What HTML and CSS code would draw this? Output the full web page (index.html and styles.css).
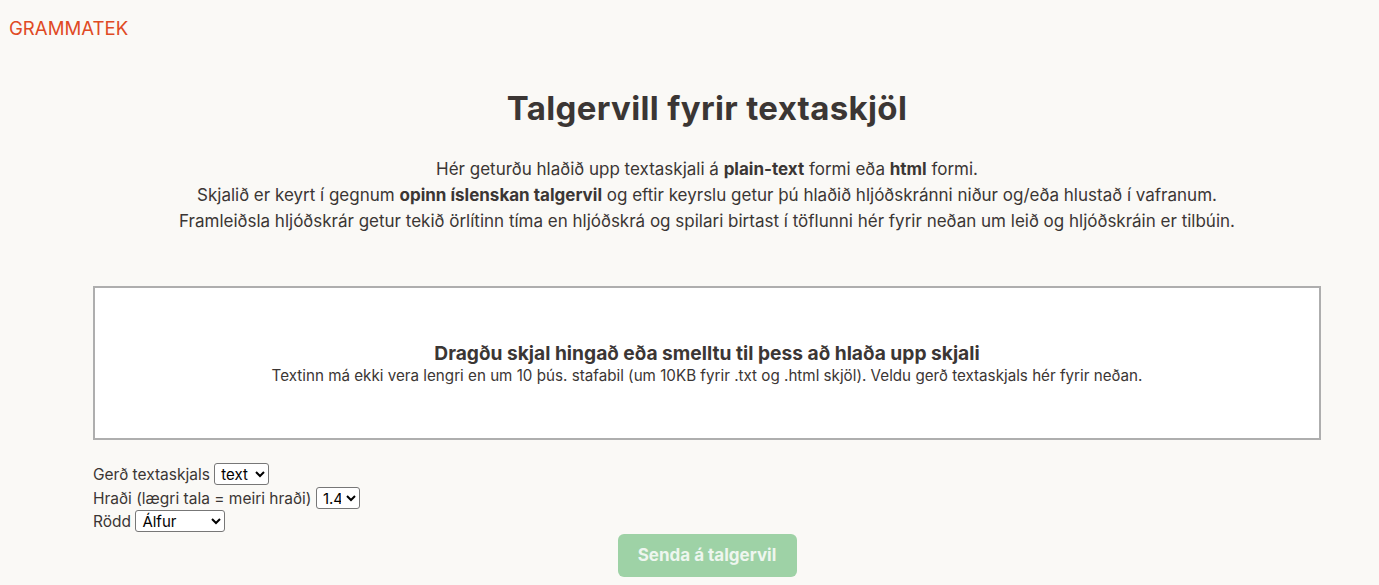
FILE: index.html
```html
<!DOCTYPE html>
<html lang="is">
<head>
<meta charset="utf-8">
<title>Talgervill fyrir textaskjöl</title>
<link rel="stylesheet" href="styles.css">
</head>
<body>
<header class="topbar">
  <a class="brand" href="#">GRAMMATEK</a>
</header>
<main class="main">
  <h1 class="title">Talgervill fyrir textaskjöl</h1>
  <p class="intro">
    Hér geturðu hlaðið upp textaskjali á <b>plain-text</b> formi eða <b>html</b> formi.<br>
    Skjalið er keyrt í gegnum <b>opinn íslenskan talgervil</b> og eftir keyrslu getur þú hlaðið hljóðskránni niður og/eða hlustað í vafranum.<br>
    Framleiðsla hljóðskrár getur tekið örlítinn tíma en hljóðskrá og spilari birtast í töflunni hér fyrir neðan um leið og hljóðskráin er tilbúin.
  </p>
  <div class="dropzone">
    <div class="drop-title">Dragðu skjal hingað eða smelltu til þess að hlaða upp skjali</div>
    <div class="drop-sub">Textinn má ekki vera lengri en um 10 þús. stafabil (um 10KB fyrir .txt og .html skjöl). Veldu gerð textaskjals hér fyrir neðan.</div>
  </div>
  <form class="options">
    <div class="row"><label>Gerð textaskjals <select class="sel sel-type"><option>text</option><option>html</option></select></label></div>
    <div class="row"><label>Hraði (lægri tala = meiri hraði) <select class="sel sel-speed"><option>1.4</option></select></label></div>
    <div class="row"><label>Rödd <select class="sel sel-voice"><option>Álfur</option><option>Diljá</option></select></label></div>
    <div class="actions"><button type="button" class="send" disabled>Senda á talgervil</button></div>
  </form>
</main>
</body>
</html>
```
FILE: styles.css
```css
html, body {
  margin: 0;
  padding: 0;
}
body {
  background: #faf9f6;
  font-family: Inter, "Noto Sans", sans-serif;
  color: #3b3634;
}
.topbar {
  padding: 17px 9px 0;
  height: 40px;
}
.brand {
  color: #e04a24;
  text-decoration: none;
  font-size: 18.6px;
}
.main {
  padding: 0 58px 0 93px;
}
.title {
  margin: 31px 0 0;
  text-align: center;
  font-size: 33px;
  font-weight: 700;
  line-height: 40px;
  letter-spacing: 0.35px;
}
.intro {
  margin: 28px 0 0;
  text-align: center;
  font-size: 17px;
  line-height: 26px;
}
.dropzone {
  margin-top: 52px;
  height: 150px;
  border: 2px solid #aeaeae;
  background: #fff;
  display: flex;
  flex-direction: column;
  justify-content: center;
  align-items: center;
  text-align: center;
}
.drop-title {
  font-size: 19.2px;
  font-weight: 700;
  line-height: 26px;
}
.drop-sub {
  font-size: 15.2px;
  line-height: 20px;
}
.options {
  margin-top: 23px;
  font-size: 15.5px;
  line-height: 23.5px;
}
.row label {
  display: inline-block;
}
.sel {
  font-family: Inter, sans-serif;
  font-size: 15px;
  color: #000;
  background: #fff;
  border: 1px solid #777;
  border-radius: 3px;
  height: 22px;
  padding: 0 2px;
}
.sel-type { width: 55px; }
.sel-speed { width: 44px; }
.sel-voice { width: 90px; }
.actions {
  display: flex;
  justify-content: center;
  margin-top: 0;
}
.send {
  width: 179px;
  height: 43px;
  border: none;
  border-radius: 6px;
  background: #9ed2a6;
  color: #eef6ef;
  font-family: Inter, sans-serif;
  font-size: 17px;
  font-weight: 700;
}
```
